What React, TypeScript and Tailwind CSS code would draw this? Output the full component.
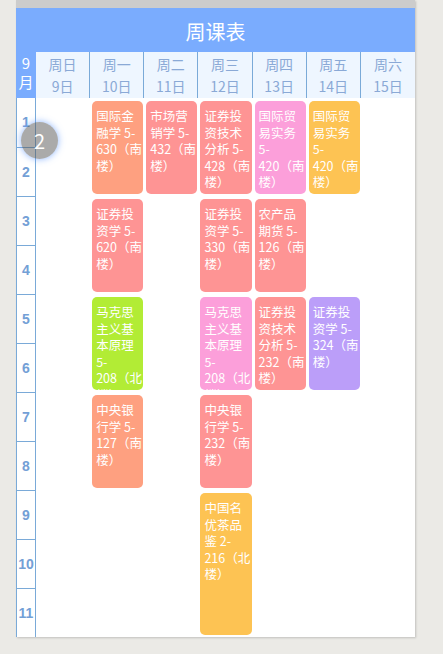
import React from "react";

type Course = { col: number; row: number; span: number; color: string; lines: string[] };

const courses: Course[] = [
  { col: 2, row: 1, span: 2, color: "bg-[#fea080]", lines: ["国际金", "融学 5-", "630（南", "楼）"] },
  { col: 3, row: 1, span: 2, color: "bg-[#fe9494]", lines: ["市场营", "销学 5-", "432（南", "楼）"] },
  { col: 4, row: 1, span: 2, color: "bg-[#fe9494]", lines: ["证券投", "资技术", "分析 5-", "428（南", "楼）"] },
  { col: 5, row: 1, span: 2, color: "bg-[#fc9fda]", lines: ["国际贸", "易实务", "5-", "420（南", "楼）"] },
  { col: 6, row: 1, span: 2, color: "bg-[#fdc353]", lines: ["国际贸", "易实务", "5-", "420（南", "楼）"] },
  { col: 2, row: 3, span: 2, color: "bg-[#fe9494]", lines: ["证券投", "资学 5-", "620（南", "楼）"] },
  { col: 4, row: 3, span: 2, color: "bg-[#fe9494]", lines: ["证券投", "资学 5-", "330（南", "楼）"] },
  { col: 5, row: 3, span: 2, color: "bg-[#fe9494]", lines: ["农产品", "期货 5-", "126（南", "楼）"] },
  { col: 2, row: 5, span: 2, color: "bg-[#b2ec35]", lines: ["马克思", "主义基", "本原理", "5-", "208（北", "楼）"] },
  { col: 4, row: 5, span: 2, color: "bg-[#fc9fda]", lines: ["马克思", "主义基", "本原理", "5-", "208（北", "楼）"] },
  { col: 5, row: 5, span: 2, color: "bg-[#fe9494]", lines: ["证券投", "资技术", "分析 5-", "232（南", "楼）"] },
  { col: 6, row: 5, span: 2, color: "bg-[#bb9ef9]", lines: ["证券投", "资学 5-", "324（南", "楼）"] },
  { col: 2, row: 7, span: 2, color: "bg-[#fea080]", lines: ["中央银", "行学 5-", "127（南", "楼）"] },
  { col: 4, row: 7, span: 2, color: "bg-[#fe9494]", lines: ["中央银", "行学 5-", "232（南", "楼）"] },
  { col: 4, row: 9, span: 3, color: "bg-[#fdc353]", lines: ["中国名", "优茶品", "鉴 2-", "216（北", "楼）"] },
];

const days = [
  ["周日", "9日"],
  ["周一", "10日"],
  ["周二", "11日"],
  ["周三", "12日"],
  ["周四", "13日"],
  ["周五", "14日"],
  ["周六", "15日"],
];

const colStart = ["", "col-start-1", "col-start-2", "col-start-3", "col-start-4", "col-start-5", "col-start-6", "col-start-7"];
const rowStart = ["", "row-start-1", "row-start-2", "row-start-3", "row-start-4", "row-start-5", "row-start-6", "row-start-7", "row-start-8", "row-start-9", "row-start-10", "row-start-11"];
const rowSpan = ["", "row-span-1", "row-span-2", "row-span-3"];

export default function App() {
  return (
    <div className="w-[443px] h-[654px] bg-[#ebeae6] font-['Noto_Sans_CJK_SC',sans-serif] overflow-hidden">
      <div className="relative ml-4 w-[399px] bg-white shadow-[1px_1px_2px_rgba(0,0,0,0.18)]">
        <div className="h-2 bg-[#cccccc]" />
        <div className="h-11 bg-[#7aacfe] flex items-center justify-center pt-1 text-white text-[20px]">
          周课表
        </div>
        <div className="flex h-[46px]">
          <div className="w-5 bg-[#7aacfe] flex flex-col items-center justify-center pb-[6px] text-white text-[15px] leading-[19px]">
            <span>9</span>
            <span>月</span>
          </div>
          <div className="flex-1 grid grid-cols-7 bg-[#eef6ff]">
            {days.map((d, i) => (
              <div
                key={i}
                className={`flex flex-col items-center justify-center text-[14px] leading-[22px] text-[#8aa9d6] ${i < 6 ? "border-r border-[#7aaad8]" : ""}`}
              >
                <span>{d[0]}</span>
                <span>{d[1]}</span>
              </div>
            ))}
          </div>
        </div>
        <div className="flex">
          <div className="w-5 border-x border-[#7aaad8] flex flex-col">
            {Array.from({ length: 11 }).map((_, i) => (
              <div
                key={i}
                className={`h-[49px] flex items-center justify-center font-['Liberation_Sans',sans-serif] font-bold text-[14px] text-[#73a0d6] ${i > 0 ? "border-t border-[#7aaad8]" : ""}`}
              >
                {i + 1}
              </div>
            ))}
          </div>
          <div className="flex-1 grid grid-cols-7 grid-rows-[repeat(11,49px)]">
            {courses.map((c, i) => (
              <div
                key={i}
                className={`${colStart[c.col]} ${rowStart[c.row]} ${rowSpan[c.span]} ${c.color} ml-[2px] mr-[1px] mt-[3px] mb-[2px] rounded-[5px] overflow-hidden pl-[4px] pt-[7px] text-white text-[12.5px] leading-[16.6px]`}
              >
                {c.lines.map((l, j) => (
                  <div key={j} className="whitespace-nowrap">
                    {l}
                  </div>
                ))}
              </div>
            ))}
          </div>
        </div>
        <div className="absolute left-[5px] top-[122px] w-[37px] h-[37px] rounded-full bg-[rgba(85,85,85,0.5)] shadow-[0_0_7px_rgba(90,150,255,0.7)] flex items-center justify-center text-white text-[20px]">
          2
        </div>
      </div>
    </div>
  );
}
